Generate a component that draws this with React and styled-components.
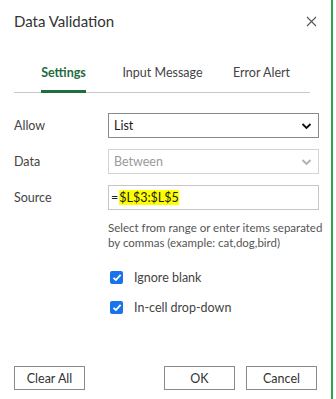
import React from 'react'
import styled, { createGlobalStyle } from 'styled-components'

const GlobalStyle = createGlobalStyle`
  html, body {
    margin: 0;
    padding: 0;
    background: #fff;
  }
  body {
    font-family: "Segoe UI", Lato, "Noto Sans", sans-serif;
    color: #333;
  }
`

const Dialog = styled.div`
  width: 333px;
  height: 399px;
  box-sizing: border-box;
  border-right: 2px solid #2aa84a;
  display: flex;
  flex-direction: column;
  background: #fff;
`

const Header = styled.div`
  display: flex;
  justify-content: space-between;
  align-items: center;
  padding: 9px 13px 0 14px;
  height: 24px;
`

const Title = styled.h1`
  margin: 0;
  font-size: 15px;
  font-weight: 400;
  color: #333;
`

const CloseButton = styled.button`
  border: 0;
  background: none;
  padding: 0;
  width: 14px;
  height: 14px;
  display: flex;
  align-items: center;
  justify-content: center;
  cursor: pointer;
`

const TabBar = styled.div`
  margin: 24px 21px 0 14px;
  display: grid;
  grid-template-columns: repeat(3, 99px);
  border-bottom: 1px solid #c8c8c8;
`

const Tab = styled.div`
  display: flex;
  justify-content: center;
  margin-bottom: -1px;
`

const TabText = styled.span`
  font-size: 12.5px;
  padding: 8px 0 10px;
  font-weight: ${p => (p.$active ? 700 : 400)};
  color: ${p => (p.$active ? '#1e6b3e' : '#444')};
  border-bottom: 3px solid ${p => (p.$active ? '#1d6f42' : 'transparent')};
`

const Form = styled.div`
  display: grid;
  grid-template-columns: 94px 211px;
  row-gap: 11px;
  margin: 20px 0 0 14px;
  align-items: center;
`

const Label = styled.div`
  font-size: 12.5px;
  color: #444;
`

const Field = styled.div`
  height: 25px;
  box-sizing: border-box;
  border: 1px solid ${p => (p.$disabled ? '#d4d4d4' : '#8a8a8a')};
  display: flex;
  align-items: center;
  justify-content: space-between;
  padding: 0 6px 0 5px;
  font-size: 12.5px;
  color: ${p => (p.$disabled ? '#9a9a9a' : '#1a1a1a')};
  ${p => p.$input && `border-color: #c6c6c6; padding-left: 2px;`}
`

const Highlight = styled.span`
  background: #ffff00;
  color: #1a1a1a;
  margin-left: 1px;
`

const Help = styled.p`
  margin: 10px 0 0 108px;
  width: 218px;
  font-size: 11.5px;
  line-height: 15px;
  color: #555;
`

const CheckRow = styled.label`
  display: flex;
  align-items: center;
  gap: 11px;
  margin: ${p => p.$first ? '20px' : '15px'} 0 0 110px;
  font-size: 12.5px;
  color: #444;
`

const Box = styled.span`
  width: 13px;
  height: 13px;
  border-radius: 2px;
  background: #1a73e8;
  display: flex;
  align-items: center;
  justify-content: center;
`

const Footer = styled.div`
  margin-top: auto;
  margin-bottom: 9px;
  display: flex;
  padding: 0 14px;
  gap: 11px;
`

const Button = styled.button`
  width: 71px;
  height: 24px;
  box-sizing: border-box;
  border: 1px solid #8a8a8a;
  background: #fff;
  font-family: inherit;
  font-size: 12.5px;
  color: #333;
  padding: 0;
  &:first-child {
    margin-right: auto;
  }
`

const Chevron = ({ color }) => (
  <svg width="11" height="8" viewBox="0 0 11 8">
    <path d="M1.5 2 L5.5 6 L9.5 2" fill="none" stroke={color} strokeWidth="1.8" />
  </svg>
)

const Check = () => (
  <svg width="10" height="9" viewBox="0 0 10 9">
    <path d="M1.5 4.8 L3.9 7 L8.6 1.8" fill="none" stroke="#fff" strokeWidth="1.8" />
  </svg>
)

export default function App() {
  return (
    <>
      <GlobalStyle />
      <Dialog>
        <Header>
          <Title>Data Validation</Title>
          <CloseButton aria-label="Close">
            <svg width="11" height="11" viewBox="0 0 11 11">
              <path d="M1 1 L10 10 M10 1 L1 10" stroke="#555" strokeWidth="1.1" />
            </svg>
          </CloseButton>
        </Header>

        <TabBar>
          <Tab><TabText $active>Settings</TabText></Tab>
          <Tab><TabText>Input Message</TabText></Tab>
          <Tab><TabText>Error Alert</TabText></Tab>
        </TabBar>

        <Form>
          <Label>Allow</Label>
          <Field>
            List
            <Chevron color="#111" />
          </Field>
          <Label>Data</Label>
          <Field $disabled>
            Between
            <Chevron color="#b0b0b0" />
          </Field>
          <Label>Source</Label>
          <Field $input>
            <span>
              =<Highlight>$L$3:$L$5</Highlight>
            </span>
          </Field>
        </Form>

        <Help>Select from range or enter items separated by commas (example: cat,dog,bird)</Help>

        <CheckRow $first>
          <Box><Check /></Box>
          Ignore blank
        </CheckRow>
        <CheckRow>
          <Box><Check /></Box>
          In-cell drop-down
        </CheckRow>

        <Footer>
          <Button>Clear All</Button>
          <Button>OK</Button>
          <Button>Cancel</Button>
        </Footer>
      </Dialog>
    </>
  )
}
